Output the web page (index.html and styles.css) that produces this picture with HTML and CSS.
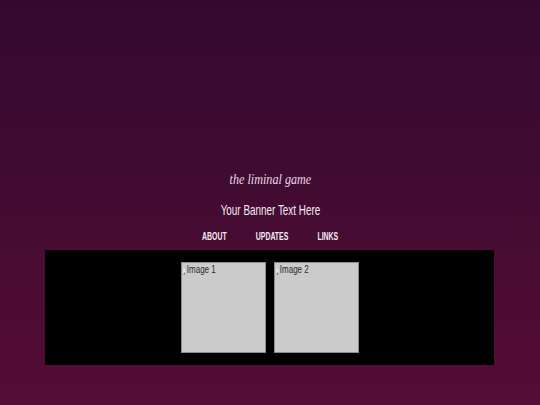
FILE: index.html
```html
<!DOCTYPE html>
<html>
<head>
<meta charset="utf-8">
<link rel="stylesheet" href="styles.css">
</head>
<body>
<div class="page">
  <header class="header">
    <div class="title-row"><span class="title">the liminal game</span></div>
    <div class="banner-row"><span class="banner">Your Banner Text Here</span></div>
    <nav class="nav">
      <a class="nav-link" href="#">ABOUT</a>
      <a class="nav-link" href="#">UPDATES</a>
      <a class="nav-link" href="#">LINKS</a>
    </nav>
  </header>
  <main class="gallery">
    <div class="pic">
      <span class="pic-alt"><svg class="broken" width="4" height="7" viewBox="0 0 4 7"><rect x="0" y="0" width="4" height="7" fill="#e8e8e8" stroke="#9a9a9a" stroke-width="0.6"/><path d="M0.5 6.5 L2 4 L3.5 6.5 Z" fill="#4aa03c"/></svg>Image 1</span>
    </div>
    <div class="pic">
      <span class="pic-alt"><svg class="broken" width="4" height="7" viewBox="0 0 4 7"><rect x="0" y="0" width="4" height="7" fill="#e8e8e8" stroke="#9a9a9a" stroke-width="0.6"/><path d="M0.5 6.5 L2 4 L3.5 6.5 Z" fill="#4aa03c"/></svg>Image 2</span>
    </div>
  </main>
</div>
</body>
</html>
```

FILE: styles.css
```css
html, body {
  margin: 0;
  padding: 0;
}
body {
  width: 540px;
  height: 405px;
  overflow: hidden;
  background: linear-gradient(to bottom, #350832 0%, #3f0b31 40%, #4a0c33 65%, #540c35 100%);
}
.page {
  display: flex;
  flex-direction: column;
  padding-top: 168px;
}
.header {
  display: flex;
  flex-direction: column;
  align-items: center;
}
.title-row {
  height: 22px;
  display: flex;
  justify-content: center;
  align-items: center;
  transform: scaleX(0.81);
}
.title {
  font-family: "Liberation Serif", serif;
  font-style: italic;
  font-size: 15px;
  color: #e8d8e6;
}
.banner-row {
  margin-top: 9px;
  height: 20px;
  display: flex;
  justify-content: center;
  align-items: center;
  transform: scaleX(0.66);
}
.banner {
  font-family: "Liberation Sans", Arial, sans-serif;
  font-size: 15px;
  color: #f3ebf2;
}
.nav {
  margin-top: 10px;
  height: 14px;
  display: flex;
  justify-content: center;
  align-items: center;
  gap: 44px;
  transform: scaleX(0.66);
}
.nav-link {
  font-family: "Liberation Sans", Arial, sans-serif;
  font-weight: bold;
  font-size: 10.5px;
  color: #f3ebf2;
  text-decoration: none;
}
.gallery {
  margin: 7px 46px 0 45px;
  height: 91px;
  padding: 12px 0;
  background: #000;
  display: flex;
  justify-content: center;
  gap: 8px;
}
.pic {
  width: 83px;
  height: 89px;
  background: #cbcbcb;
  border: 1px solid #8c8c8c;
}
.pic-alt {
  display: flex;
  align-items: center;
  gap: 1px;
  padding: 1px 0 0 1px;
  font-family: "Liberation Sans", Arial, sans-serif;
  font-size: 10px;
  color: #2a2a2a;
  transform: scaleX(0.8);
  transform-origin: left center;
}
.broken {
  flex: none;
  margin-top: 3px;
}
```
